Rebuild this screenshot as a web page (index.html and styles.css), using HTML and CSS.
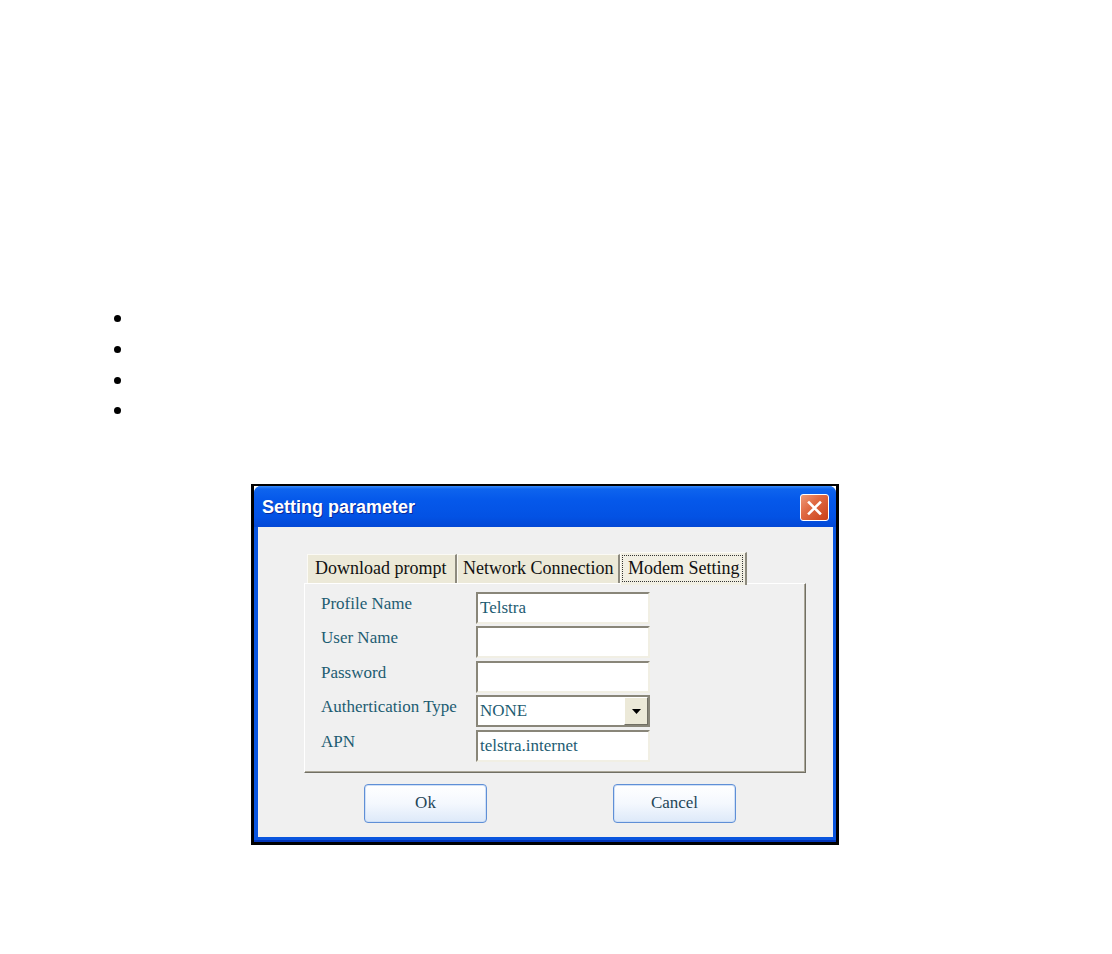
FILE: index.html
```html
<!DOCTYPE html>
<html>
<head>
<meta charset="utf-8">
<title>Setting parameter</title>
<link rel="stylesheet" href="styles.css">
</head>
<body>
<ul class="bullets">
  <li></li>
  <li></li>
  <li></li>
  <li></li>
</ul>
<div class="shot">
  <div class="window">
    <div class="titlebar">
      <span class="title">Setting parameter</span>
      <span class="close">
        <svg width="17" height="16" viewBox="0 0 17 16"><path d="M3 2.5 L14 13.5 M14 2.5 L3 13.5" stroke="#fff" stroke-width="2.6" stroke-linecap="square"/></svg>
      </span>
    </div>
    <div class="client">
      <div class="tabs">
        <div class="tab t1">Download prompt</div>
        <div class="tab t2">Network Connection</div>
        <div class="tab t3 active"><span class="focus">Modem Setting</span></div>
      </div>
      <div class="panel">
        <div class="form">
          <div class="label">Profile Name</div>
          <div class="field">Telstra</div>
          <div class="label">User Name</div>
          <div class="field"></div>
          <div class="label">Password</div>
          <div class="field"></div>
          <div class="label">Authertication Type</div>
          <div class="field select"><span class="val">NONE</span><span class="drop"><svg width="9" height="5" viewBox="0 0 9 5"><path d="M0 0 H9 L4.5 5 Z" fill="#000"/></svg></span></div>
          <div class="label">APN</div>
          <div class="field">telstra.internet</div>
        </div>
      </div>
      <div class="buttons">
        <div class="btn ok">Ok</div>
        <div class="btn cancel">Cancel</div>
      </div>
    </div>
  </div>
</div>
</body>
</html>
```
FILE: styles.css
```css
html, body {
  margin: 0;
  padding: 0;
  background: #ffffff;
}
body {
  font-family: "Liberation Serif", "Times New Roman", serif;
  height: 954px;
}
.bullets {
  list-style: none;
  margin: 303.67px 0 0 0;
  padding: 0;
}
.bullets li {
  height: 30.67px;
  display: flex;
  align-items: center;
}
.bullets li::before {
  content: "";
  width: 7px;
  height: 7px;
  border-radius: 50%;
  background: #000;
  margin-left: 113.5px;
}
.shot {
  margin: 57.67px 0 0 251px;
  width: 588px;
  height: 361px;
  box-sizing: border-box;
  border: 3px solid #000;
  border-top-width: 2px;
  background: #fff;
}
.window {
  height: 100%;
  background: #0a55de;
  border-radius: 7px 7px 0 0;
  padding: 0 3px 5px 4px;
  box-sizing: border-box;
  display: flex;
  flex-direction: column;
  box-shadow: inset 0 -2px 0 #0335b8;
}
.titlebar {
  height: 41px;
  box-sizing: border-box;
  flex: none;
  display: flex;
  align-items: center;
  justify-content: space-between;
  padding: 3px 7px 0 4px;
  margin: 0 -3px 0 -4px;
  border-radius: 7px 7px 0 0;
  background: linear-gradient(#3a8cf7 0, #0e64ee 3px, #0558ea 35%, #0352e4 75%, #0348d6 100%);
}
.title {
  font-family: "Liberation Sans", Arial, sans-serif;
  font-weight: bold;
  font-size: 18px;
  color: #fff;
  text-shadow: 1px 1px 0 #0a2a9a;
  padding-left: 4px;
}
.close {
  width: 29px;
  height: 27px;
  box-sizing: border-box;
  border: 1px solid #fff;
  border-radius: 3px;
  background: linear-gradient(135deg, #ef9a78 0%, #e06a43 40%, #c93f18 100%);
  display: flex;
  align-items: center;
  justify-content: center;
}
.client {
  flex: 1;
  background: #f0f0f0;
  padding-top: 25px;
  display: flex;
  flex-direction: column;
}
.tabs {
  display: flex;
  align-items: flex-end;
  margin-left: 49px;
  height: 31px;
}
.tab {
  box-sizing: border-box;
  height: 29px;
  background: #ece9d8;
  border-top: 1px solid #fbfaf5;
  border-left: 1px solid #fbfaf5;
  border-right: 2px solid #8d8a7e;
  font-size: 18px;
  color: #111;
  display: flex;
  align-items: center;
  padding-left: 7px;
  white-space: nowrap;
}
.t1 { width: 150px; }
.t2 { width: 163px; padding-left: 5px; }
.t3 { width: 127px; }
.tab.active {
  height: 33px;
  margin-bottom: -2px;
  position: relative;
  z-index: 1;
  background: #f1efe3;
  padding: 2px 2px 3px 1px;
  align-items: stretch;
}
.focus {
  flex: 1;
  border: 1px dotted #333;
  display: flex;
  align-items: center;
  padding-left: 5px;
}
.panel {
  margin-left: 46px;
  width: 502px;
  height: 190px;
  box-sizing: border-box;
  border-top: 1px solid #ffffff;
  border-left: 1px solid #ffffff;
  border-right: 1px solid #716f64;
  border-bottom: 1px solid #716f64;
  box-shadow: inset -1px -1px 0 #aca899;
  padding: 8px 0 0 16px;
}
.form {
  display: grid;
  grid-template-columns: 155px 174px;
  grid-auto-rows: 32px;
  row-gap: 2.5px;
}
.label {
  align-self: start;
  line-height: 24px;
  font-size: 17px;
  color: #1d5c72;
  white-space: nowrap;
}
.field {
  box-sizing: border-box;
  height: 32px;
  background: #fff;
  border-top: 2px solid #898679;
  border-left: 2px solid #898679;
  border-right: 2px solid #f1efe4;
  border-bottom: 2px solid #f1efe4;
  font-size: 17px;
  color: #1d5c72;
  padding-left: 2px;
  display: flex;
  align-items: center;
}
.field.select {
  border: 2px solid #898679;
  padding: 0 0 0 2px;
  align-items: stretch;
}
.val {
  flex: 1;
  display: flex;
  align-items: center;
}
.drop {
  width: 24px;
  box-sizing: border-box;
  background: #ece9d8;
  border-top: 1px solid #fff;
  border-left: 1px solid #fff;
  border-right: 1px solid #716f64;
  border-bottom: 1px solid #716f64;
  display: flex;
  align-items: center;
  justify-content: center;
}
.buttons {
  display: flex;
  margin: 11px 0 0 106px;
  gap: 126px;
}
.btn {
  width: 123px;
  height: 39px;
  box-sizing: border-box;
  border: 1px solid #5f8fd6;
  border-radius: 4px;
  background: linear-gradient(#ffffff 0%, #f4f8fe 50%, #dde9f9 100%);
  box-shadow: inset 0 0 0 1px #cfe0f7;
  font-size: 17px;
  color: #1f4658;
  display: flex;
  align-items: center;
  justify-content: center;
}
```
